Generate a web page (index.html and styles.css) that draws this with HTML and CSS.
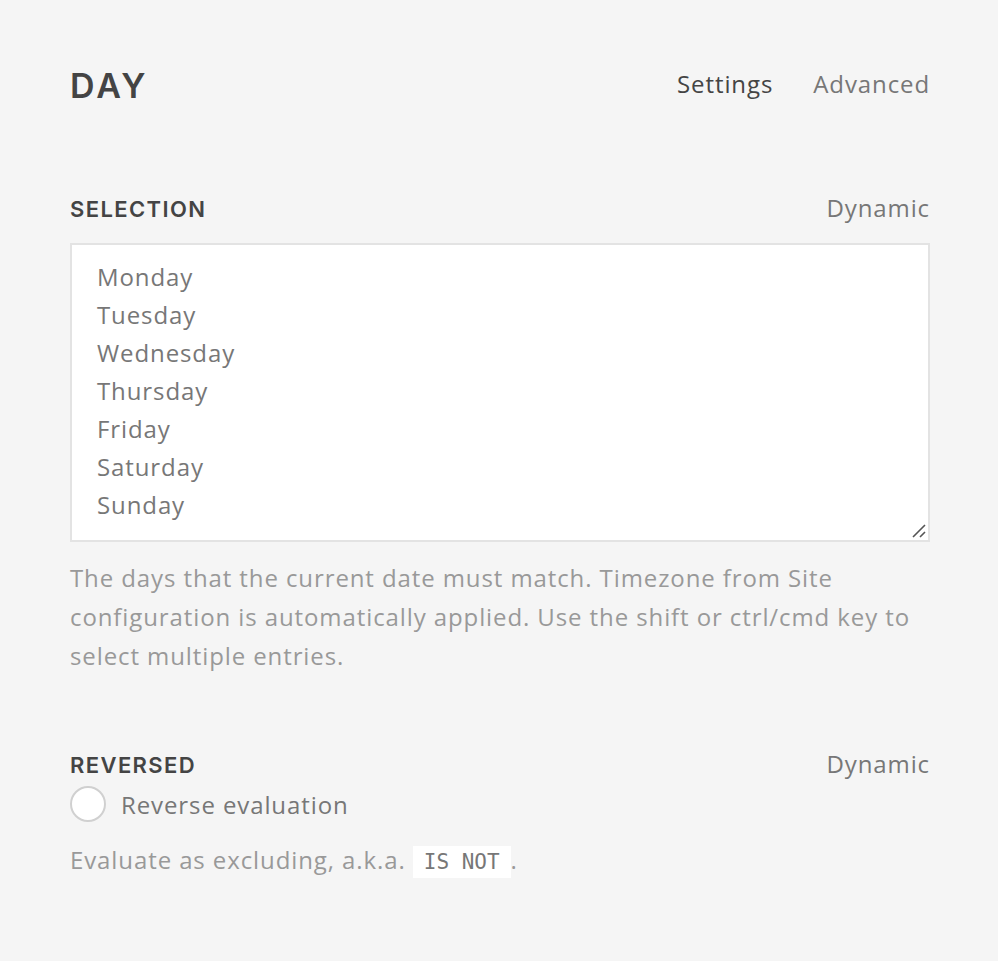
FILE: index.html
```html
<!DOCTYPE html>
<html>
<head>
<meta charset="utf-8">
<link rel="stylesheet" href="styles.css">
</head>
<body>
<div class="panel">
  <header class="top">
    <h1 class="title">DAY</h1>
    <nav class="tabs">
      <span class="tab active">Settings</span>
      <span class="tab">Advanced</span>
    </nav>
  </header>

  <section class="field field-selection">
    <div class="field-head">
      <span class="label">SELECTION</span>
      <span class="dynamic">Dynamic</span>
    </div>
    <div class="listbox">
      <div class="opt">Monday</div>
      <div class="opt">Tuesday</div>
      <div class="opt">Wednesday</div>
      <div class="opt">Thursday</div>
      <div class="opt">Friday</div>
      <div class="opt">Saturday</div>
      <div class="opt">Sunday</div>
      <svg class="grip" width="14" height="14" viewBox="0 0 14 14"><path d="M1 13 L13 1 M8 13 L13 8" stroke="#555" stroke-width="1.6" fill="none"/></svg>
    </div>
    <p class="help">The days that the current date must match. Timezone from Site configuration is automatically applied. Use the shift or ctrl/cmd key to select multiple entries.</p>
  </section>

  <section class="field field-reversed">
    <div class="field-head">
      <span class="label">REVERSED</span>
      <span class="dynamic">Dynamic</span>
    </div>
    <label class="check">
      <span class="radio"></span>
      <span class="check-text">Reverse evaluation</span>
    </label>
    <p class="help help2">Evaluate as excluding, a.k.a. <code class="code">IS NOT</code>.</p>
  </section>
</div>
</body>
</html>
```

FILE: styles.css
```css
html, body {
  margin: 0;
  padding: 0;
  background: #f5f5f5;
}
body {
  font-family: "Open Sans", "Liberation Sans", sans-serif;
  color: #444;
  letter-spacing: 0.9px;
}
.panel {
  padding: 62px 68px 40px 70px;
}
.top {
  display: flex;
  align-items: center;
  justify-content: space-between;
  height: 46px;
}
.title {
  margin: 0;
  font-family: "Inter", "Lato", sans-serif;
  font-weight: 600;
  font-size: 34px;
  letter-spacing: 3px;
  color: #444;
}
.tabs {
  display: flex;
  gap: 40px;
  padding-bottom: 4px;
}
.tab {
  font-size: 24px;
  color: #777;
}
.tab.active {
  color: #444;
}
.field-selection {
  margin-top: 86px;
}
.field-head {
  display: flex;
  justify-content: space-between;
  align-items: center;
  height: 30px;
}
.label {
  font-family: "Inter", "Lato", sans-serif;
  font-weight: 600;
  font-size: 22px;
  letter-spacing: 1.4px;
  color: #444;
}
.dynamic {
  font-size: 24px;
  color: #777;
  padding-bottom: 4px;
}
.listbox {
  position: relative;
  margin-top: 19px;
  background: #fff;
  border: 2px solid #e3e3e3;
  height: 299px;
  padding: 13px 25px 0;
  box-sizing: border-box;
}
.opt {
  font-size: 24px;
  line-height: 38px;
  color: #777;
}
.grip {
  position: absolute;
  right: 2px;
  bottom: 2px;
}
.help {
  margin: 16px 0 0;
  font-size: 24px;
  line-height: 39px;
  color: #999;
}
.field-reversed {
  margin-top: 75px;
}
.check {
  display: flex;
  align-items: center;
  gap: 15px;
  margin-top: 6px;
}
.radio {
  width: 32px;
  height: 32px;
  border: 2px solid #d0d0d0;
  border-radius: 50%;
  background: #fff;
}
.check-text {
  font-size: 24px;
  color: #777;
}
.help2 {
  margin-top: 18px;
}
.code {
  font-family: "DejaVu Sans Mono", "Liberation Mono", monospace;
  font-size: 21px;
  letter-spacing: 0;
  background: #fff;
  color: #777;
  padding: 4px 11px;
}
```
